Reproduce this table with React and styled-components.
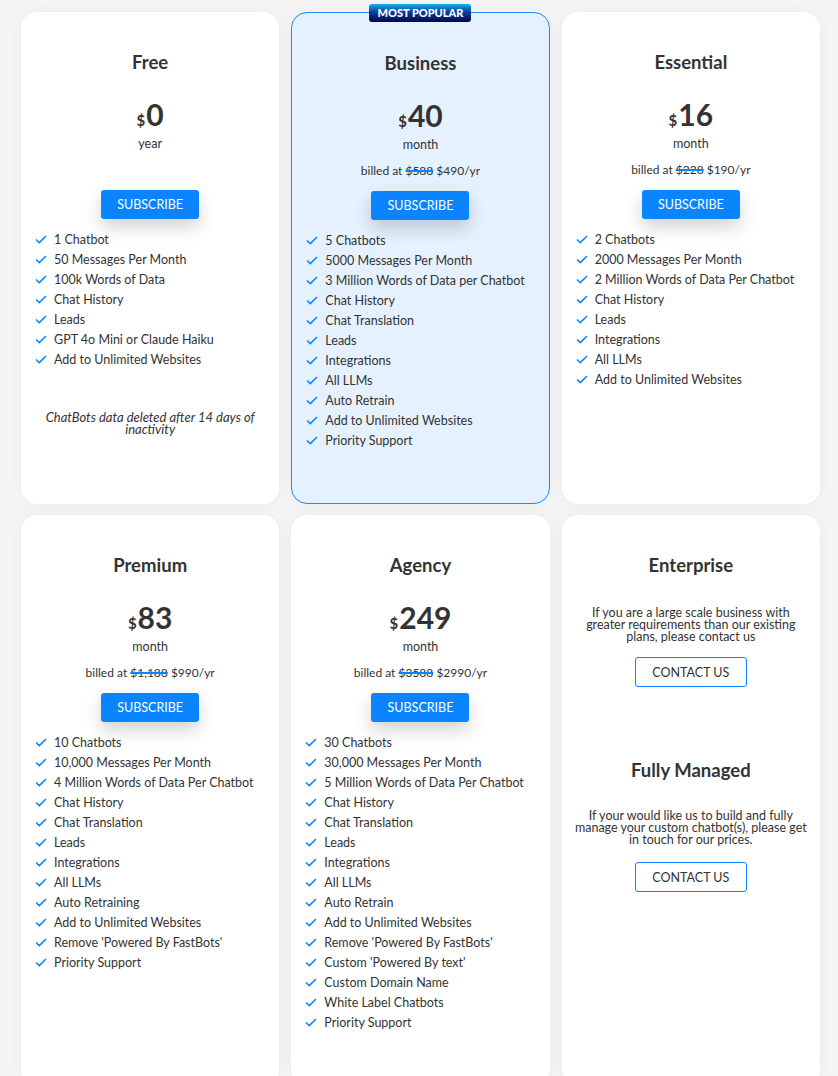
import React from 'react'
import styled, { createGlobalStyle, css } from 'styled-components'

const GlobalStyle = createGlobalStyle`
  body {
    margin: 0;
    background: #f5f5f5;
    font-family: Lato, "Liberation Sans", sans-serif;
    color: #333;
  }
`

const Page = styled.div`
  width: 799px;
  padding: 12px 0 0 21px;
  display: grid;
  grid-template-columns: repeat(3, 1fr);
  gap: 11px 12px;
`

const Card = styled.div`
  position: relative;
  box-sizing: border-box;
  background: #fff;
  border-radius: 16px;
  box-shadow: 0 0 14px rgba(0, 0, 0, 0.05);
  padding: 39px 14px 53px;
  display: flex;
  flex-direction: column;
  align-items: center;

  ${p => p.$featured && css`
    background: #e5f1fe;
    border: 1px solid #1a8cff;
  `}
`

const Badge = styled.div`
  position: absolute;
  top: -9px;
  left: 50%;
  transform: translateX(-50%);
  width: 102px;
  height: 18px;
  border-radius: 3px;
  background: linear-gradient(to bottom, #17aef0 0%, #0a3d9a 45%, #03084a 100%);
  color: #fff;
  font-size: 11px;
  font-weight: 900;
  line-height: 18px;
  text-align: center;
`

const Title = styled.h2`
  margin: 0;
  font-size: 18.5px;
  line-height: 22px;
  font-weight: 700;
  color: #333;
`

const Price = styled.div`
  margin-top: 23px;
  height: 36px;
  line-height: 36px;
  font-size: 30px;
  font-weight: 700;
  color: #333;

  span {
    font-size: 15px;
    margin-right: 1px;
  }
`

const Period = styled.div`
  margin-top: 4px;
  font-size: 12.5px;
  line-height: 16px;
`

const Billed = styled.div`
  margin-top: 10px;
  min-height: 16px;
  font-size: 12px;
  line-height: 16px;

  s {
    text-decoration-color: #0a84ff;
    text-decoration-thickness: 1.5px;
  }
`

const SubscribeButton = styled.button`
  margin-top: 12px;
  width: 98px;
  height: 29px;
  border: none;
  border-radius: 3px;
  background: #0a84ff;
  color: #fff;
  font-family: inherit;
  font-size: 12.5px;
  box-shadow: 0 8px 18px rgba(0, 0, 0, 0.18);
`

const Features = styled.ul`
  list-style: none;
  margin: 10px 0 0;
  padding: 0;
  align-self: stretch;
`

const Feature = styled.li`
  display: flex;
  align-items: center;
  gap: 7px;
  height: 20px;
  font-size: 12.5px;
  color: #333;

  svg {
    flex: none;
  }
`

const Note = styled.p`
  margin: 42px 4px 0;
  font-size: 13px;
  line-height: 12px;
  font-style: italic;
  text-align: center;
`

const Desc = styled.p`
  margin: ${p => p.$top}px ${p => p.$side}px 0;
  font-size: 12.5px;
  line-height: 12px;
  text-align: center;
`

const ContactButton = styled.button`
  margin-top: ${p => p.$top}px;
  width: 112px;
  height: 30px;
  border: 1px solid #0a84ff;
  border-radius: 3px;
  background: #fff;
  color: #333;
  font-family: inherit;
  font-size: 12.5px;
`

const SpacedTitle = styled(Title)`
  margin-top: ${p => p.$top || 0}px;
`

const Check = () => (
  <svg width="12" height="9" viewBox="0 0 12 9">
    <path d="M1 4.5 L4.3 7.6 L11 1" fill="none" stroke="#0a84ff" strokeWidth="1.5" />
  </svg>
)

const plans = [
  {
    name: 'Free', price: '0', period: 'year',
    features: ['1 Chatbot', '50 Messages Per Month', '100k Words of Data', 'Chat History', 'Leads', 'GPT 4o Mini or Claude Haiku', 'Add to Unlimited Websites'],
    note: 'ChatBots data deleted after 14 days of inactivity',
  },
  {
    name: 'Business', price: '40', period: 'month', was: '$588', now: '$490/yr', featured: true,
    features: ['5 Chatbots', '5000 Messages Per Month', '3 Million Words of Data per Chatbot', 'Chat History', 'Chat Translation', 'Leads', 'Integrations', 'All LLMs', 'Auto Retrain', 'Add to Unlimited Websites', 'Priority Support'],
  },
  {
    name: 'Essential', price: '16', period: 'month', was: '$228', now: '$190/yr',
    features: ['2 Chatbots', '2000 Messages Per Month', '2 Million Words of Data Per Chatbot', 'Chat History', 'Leads', 'Integrations', 'All LLMs', 'Add to Unlimited Websites'],
  },
  {
    name: 'Premium', price: '83', period: 'month', was: '$1,188', now: '$990/yr',
    features: ['10 Chatbots', '10,000 Messages Per Month', '4 Million Words of Data Per Chatbot', 'Chat History', 'Chat Translation', 'Leads', 'Integrations', 'All LLMs', 'Auto Retraining', 'Add to Unlimited Websites', "Remove 'Powered By FastBots'", 'Priority Support'],
  },
  {
    name: 'Agency', price: '249', period: 'month', was: '$3588', now: '$2990/yr',
    features: ['30 Chatbots', '30,000 Messages Per Month', '5 Million Words of Data Per Chatbot', 'Chat History', 'Chat Translation', 'Leads', 'Integrations', 'All LLMs', 'Auto Retrain', 'Add to Unlimited Websites', "Remove 'Powered By FastBots'", "Custom 'Powered By text'", 'Custom Domain Name', 'White Label Chatbots', 'Priority Support'],
  },
]

const PlanCard = ({ plan }) => (
  <Card $featured={plan.featured}>
    {plan.featured && <Badge>MOST POPULAR</Badge>}
    <Title>{plan.name}</Title>
    <Price><span>$</span>{plan.price}</Price>
    <Period>{plan.period}</Period>
    <Billed>
      {plan.was && <>billed at <s>{plan.was}</s> {plan.now}</>}
    </Billed>
    <SubscribeButton>SUBSCRIBE</SubscribeButton>
    <Features>
      {plan.features.map(f => (
        <Feature key={f}><Check />{f}</Feature>
      ))}
    </Features>
    {plan.note && <Note>{plan.note}</Note>}
  </Card>
)

const App = () => (
  <>
    <GlobalStyle />
    <Page>
      {plans.map(p => <PlanCard key={p.name} plan={p} />)}
      <Card>
        <Title>Enterprise</Title>
        <Desc $top={31} $side={6}>If you are a large scale business with greater requirements than our existing plans, please contact us</Desc>
        <ContactButton $top={14}>CONTACT US</ContactButton>
        <SpacedTitle $top={72}>Fully Managed</SpacedTitle>
        <Desc $top={29} $side={-5}>If your would like us to build and fully manage your custom chatbot(s), please get in touch for our prices.</Desc>
        <ContactButton $top={16}>CONTACT US</ContactButton>
      </Card>
    </Page>
  </>
)

export default App
